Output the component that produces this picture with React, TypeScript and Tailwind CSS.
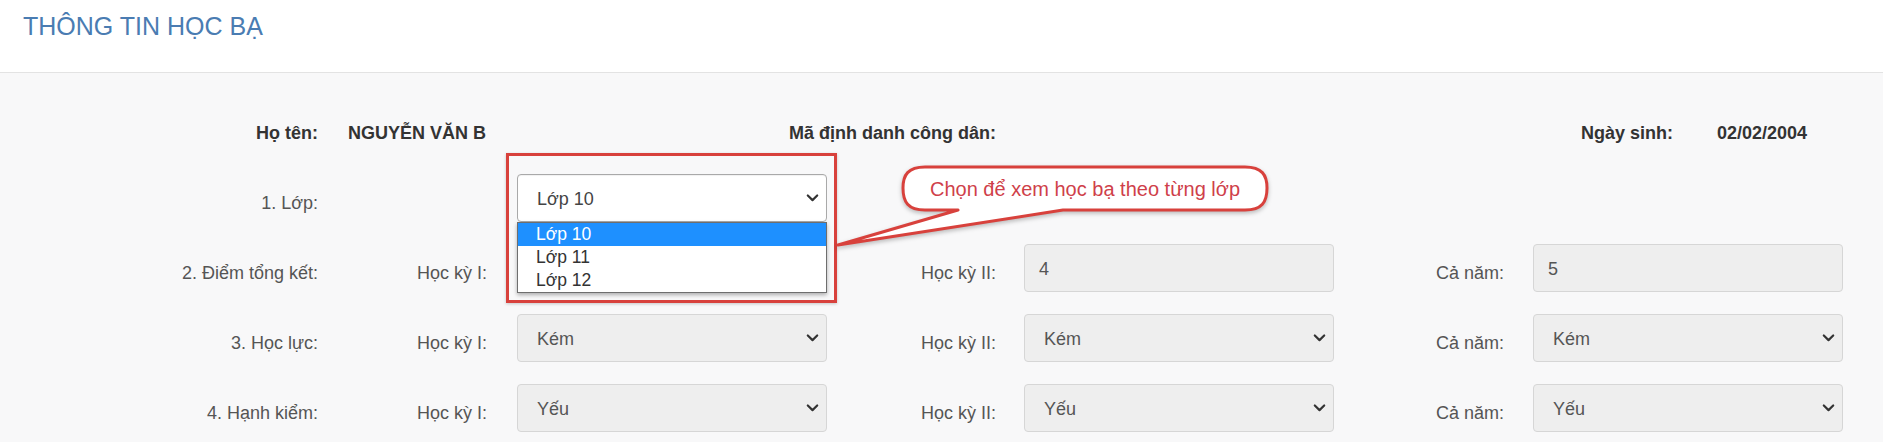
import React from "react";

function Chevron() {
  return (
    <svg
      width="13"
      height="9"
      viewBox="0 0 13 9"
      className="absolute right-[7px] top-1/2 -translate-y-1/2"
    >
      <path
        d="M1.8 2 L6.5 6.6 L11.2 2"
        fill="none"
        stroke="#333333"
        strokeWidth="2.2"
        strokeLinecap="round"
        strokeLinejoin="round"
      />
    </svg>
  );
}

function FakeSelect({ value, active = false }: { value: string; active?: boolean }) {
  return (
    <div
      className={
        active
          ? "relative flex h-[48px] items-center rounded-[4px] border border-[#a9a9a9] bg-white pl-[19px] pt-[2px] leading-[24px] text-[#444] shadow-[inset_0_1px_1px_rgba(0,0,0,0.06)]"
          : "relative flex h-[48px] items-center rounded-[4px] border border-[#d6d6d6] bg-[#eeeeee] pl-[19px] pt-[2px] leading-[24px] text-[#555]"
      }
    >
      <span>{value}</span>
      <Chevron />
    </div>
  );
}

function FakeInput({ value }: { value: string }) {
  return (
    <div className="flex h-[48px] items-center rounded-[4px] border border-[#d6d6d6] bg-[#eeeeee] pl-[14px] pt-[2px] leading-[24px] text-[#555]">
      <span>{value}</span>
    </div>
  );
}

function Label({ children, pr }: { children: React.ReactNode; pr: string }) {
  return <div className={`pt-[17px] text-right leading-[25px] text-[#555] ${pr}`}>{children}</div>;
}

export default function App() {
  return (
    <div className="relative h-[442px] w-[1883px] overflow-hidden bg-[#f8f8f9] font-['Liberation_Sans',Arial,sans-serif] text-[18px]">
      {/* Header */}
      <div className="h-[73px] border-b border-[#e3e3e3] bg-white pl-[23px] pt-[12px]">
        <h1 className="text-[25px] font-normal leading-[29px] text-[#4a7cb2]">THÔNG TIN HỌC BẠ</h1>
      </div>

      {/* Body */}
      <div className="pt-[48px]">
        {/* Info row */}
        <div className="grid h-[24px] grid-cols-[348px_169px_310px_197px_310px_199px_310px] font-bold leading-[24px] text-[#333]">
          <div className="pr-[30px] text-right">Họ tên:</div>
          <div className="whitespace-nowrap">NGUYỄN VĂN B</div>
          <div className="col-span-2 pr-[28px] text-right">Mã định danh công dân:</div>
          <div></div>
          <div></div>
          <div className="flex whitespace-nowrap">
            <span className="w-[140px] text-right">Ngày sinh:</span>
            <span className="ml-[44px]">02/02/2004</span>
          </div>
        </div>

        {/* Form rows */}
        <div className="mt-[29px] grid grid-cols-[348px_169px_310px_197px_310px_199px_310px] gap-y-[22px]">
          {/* Row 1 */}
          <Label pr="pr-[30px]">1. Lớp:</Label>
          <div></div>
          <FakeSelect value="Lớp 10" active />
          <div></div>
          <div></div>
          <div></div>
          <div></div>

          {/* Row 2 */}
          <Label pr="pr-[30px]">2. Điểm tổng kết:</Label>
          <Label pr="pr-[30px]">Học kỳ I:</Label>
          <FakeInput value="" />
          <Label pr="pr-[28px]">Học kỳ II:</Label>
          <FakeInput value="4" />
          <Label pr="pr-[29px]">Cả năm:</Label>
          <FakeInput value="5" />

          {/* Row 3 */}
          <Label pr="pr-[30px]">3. Học lực:</Label>
          <Label pr="pr-[30px]">Học kỳ I:</Label>
          <FakeSelect value="Kém" />
          <Label pr="pr-[28px]">Học kỳ II:</Label>
          <FakeSelect value="Kém" />
          <Label pr="pr-[29px]">Cả năm:</Label>
          <FakeSelect value="Kém" />

          {/* Row 4 */}
          <Label pr="pr-[30px]">4. Hạnh kiểm:</Label>
          <Label pr="pr-[30px]">Học kỳ I:</Label>
          <FakeSelect value="Yếu" />
          <Label pr="pr-[28px]">Học kỳ II:</Label>
          <FakeSelect value="Yếu" />
          <Label pr="pr-[29px]">Cả năm:</Label>
          <FakeSelect value="Yếu" />
        </div>
      </div>

      {/* Open dropdown list */}
      <div className="absolute left-[517px] top-[222px] w-[310px] border border-[#6e6e6e] bg-white text-[17.5px] leading-[23px] text-[#333] shadow-[0_2px_4px_rgba(0,0,0,0.3)]">
        <div className="h-[23px] bg-[#1e90ff] pl-[18px] text-white">Lớp 10</div>
        <div className="h-[23px] pl-[18px]">Lớp 11</div>
        <div className="h-[23px] pl-[18px]">Lớp 12</div>
      </div>

      {/* Red highlight box */}
      <div className="absolute left-[506px] top-[153px] h-[150px] w-[331px] border-[3px] border-[#d8413c] shadow-[0_1px_3px_rgba(0,0,0,0.2)]"></div>

      {/* Callout */}
      <div className="absolute left-[830px] top-[160px] h-[100px] w-[450px]">
        <svg
          width="450"
          height="100"
          viewBox="0 0 450 100"
          className="absolute inset-0 drop-shadow-[0_2px_2px_rgba(0,0,0,0.25)]"
        >
          <path
            d="M95 7 H415 C432 7 437 15 437 28 C437 42 432 50 415 50 H233 L8 85 L128 50 H95 C78 50 73 42 73 28 C73 15 78 7 95 7 Z"
            fill="#ffffff"
            stroke="#d8413c"
            strokeWidth="3"
            strokeLinejoin="round"
          />
        </svg>
        <div className="absolute left-[73px] top-[7px] flex h-[43px] w-[364px] items-center justify-center text-[20px] leading-[24px] text-[#cf3f4a]">
          Chọn để xem học bạ theo từng lớp
        </div>
      </div>
    </div>
  );
}
